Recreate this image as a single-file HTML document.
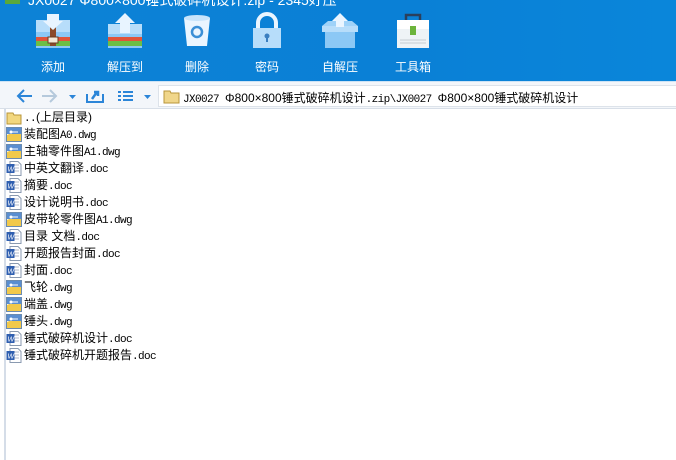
<!DOCTYPE html>
<html><head><meta charset="utf-8"><style>
*{margin:0;padding:0;box-sizing:border-box}
body{width:676px;height:460px;overflow:hidden;background:#fff;font-family:"Liberation Sans","Noto Sans CJK SC",sans-serif;position:relative}
#hdr{position:absolute;left:0;top:0;width:676px;height:81px;background:linear-gradient(90deg,#0d82d6,#0a80d6 60%,#0a86da);}
#title{position:absolute;left:28px;top:-10px;color:#fff;font-size:14px;white-space:nowrap}
.tb{position:absolute;top:12px;width:60px;text-align:center;color:#fff;font-size:12px}
.tb svg{display:block;margin:0 auto}
.tb span{display:block;margin-top:10px}
#bar{position:absolute;left:0;top:81px;width:676px;height:28px;background:#f3f6fa;border-top:1px solid #cde3f5;border-bottom:1px solid #d8dfe8}
#addr{position:absolute;left:158px;top:3px;width:518px;height:22px;background:#fff;border:1px solid #dde3ea;border-right:none}
#addr .t{position:absolute;left:24px;top:3px;font-size:12px;white-space:nowrap;color:#000}
.m{font-family:"Liberation Mono",monospace;font-size:11px;letter-spacing:-0.6px}
#list{position:absolute;left:0;top:109px;width:676px;height:351px;border-left:5px solid #fff}
#lb{position:absolute;left:4px;top:109px;width:2px;height:351px;background:#d5dde8}
.r{position:absolute;left:6px;height:17px;font-size:12px;white-space:nowrap;color:#000;line-height:17px}
.r i{position:absolute;left:0;top:1px;width:16px;height:15px}
.r b{position:absolute;left:18px;font-weight:normal}
</style></head><body>
<div id="hdr">
<div style="position:absolute;left:5px;top:0;width:15px;height:4px;background:#5aa83a"></div>
<div id="title">JX0027 Φ800×800锤式破碎机设计.zip - 2345好压</div>

<div class="tb" style="left:23px"><svg width="36" height="36" viewBox="0 0 36 36"><rect x="1" y="8" width="34" height="28" fill="#8cc8f5"/><rect x="1" y="8" width="34" height="12" fill="#b7ddfa"/><rect x="1" y="25" width="34" height="4" fill="#e0543a"/><rect x="1" y="29" width="34" height="5" fill="#6cbe45"/><rect x="15" y="14" width="6" height="20" fill="#8b4a2a"/><rect x="13" y="25" width="10" height="6" fill="#f3e9d8" stroke="#6a3a20"/><path d="M12 2h12v7h4l-10 9-10-9h4z" fill="#e8f4ff"/></svg><span>添加</span></div>
<div class="tb" style="left:95px"><svg width="36" height="36" viewBox="0 0 36 36"><rect x="1" y="12" width="34" height="24" fill="#8cc8f5"/><rect x="1" y="12" width="34" height="10" fill="#b7ddfa"/><rect x="1" y="25" width="34" height="4" fill="#e0543a"/><rect x="1" y="29" width="34" height="5" fill="#6cbe45"/><path d="M18 1l10 10h-5v10h-10v-10h-5z" fill="#e8f4ff"/></svg><span>解压到</span></div>
<div class="tb" style="left:167px"><svg width="36" height="36" viewBox="0 0 36 36"><path d="M5 6h26l-3 28h-20z" fill="#eaf5ff"/><ellipse cx="18" cy="6" rx="13" ry="3" fill="#c8e4fb"/><circle cx="18" cy="20" r="5" fill="none" stroke="#3b8fd6" stroke-width="2.5"/></svg><span>删除</span></div>
<div class="tb" style="left:237px"><svg width="36" height="36" viewBox="0 0 36 36"><path d="M9 16v-5a9 9 0 0 1 18 0v5" fill="none" stroke="#eaf5ff" stroke-width="4"/><rect x="4" y="16" width="28" height="20" fill="#b7ddfa"/><circle cx="18" cy="24" r="2.5" fill="#3b7fc0"/><rect x="17" y="24" width="2" height="6" fill="#3b7fc0"/></svg><span>密码</span></div>
<div class="tb" style="left:310px"><svg width="40" height="36" viewBox="0 0 40 36"><path d="M2 14l6-5h24l6 5z" fill="#9fd2f8"/><rect x="5" y="14" width="30" height="22" fill="#8cc8f5"/><rect x="2" y="14" width="36" height="6" fill="#b7ddfa"/><path d="M20 1l8 8h-4v6h-8v-6h-4z" fill="#eaf5ff"/></svg><span>自解压</span></div>
<div class="tb" style="left:383px"><svg width="36" height="36" viewBox="0 0 36 36"><path d="M11 8v-5h14v5" fill="none" stroke="#2b3f5c" stroke-width="2.5"/><rect x="2" y="8" width="32" height="28" fill="#eef3f6"/><rect x="2" y="8" width="32" height="9" fill="#fff"/><rect x="15" y="14" width="6" height="9" fill="#6cb43c"/><path d="M5 28h26M5 31h26" stroke="#c5ccd2"/></svg><span>工具箱</span></div>
</div>

<div id="bar">
<svg style="position:absolute;left:14px;top:5px" width="150" height="18" viewBox="0 0 150 18">
<path d="M4 9h14M10 3l-6 6 6 6" fill="none" stroke="#2b85d8" stroke-width="2"/>
<path d="M28 9h14M36 3l6 6-6 6" fill="none" stroke="#b5c9dc" stroke-width="2"/>
<path d="M55 8h7l-3.5 4z" fill="#2b85d8"/>
<path d="M73 7v8h16v-8" fill="none" stroke="#2b85d8" stroke-width="2"/><path d="M78 12l5-7M80 5h4v4" fill="none" stroke="#2b85d8" stroke-width="2.5"/>
<g fill="#2b85d8"><rect x="104" y="4" width="3" height="2"/><rect x="104" y="8" width="3" height="2"/><rect x="104" y="12" width="3" height="2"/><rect x="109" y="4" width="10" height="2"/><rect x="109" y="8" width="10" height="2"/><rect x="109" y="12" width="10" height="2"/></g>
<path d="M130 8h7l-3.5 4z" fill="#2b85d8"/>
</svg>
<div id="addr"><svg style="position:absolute;left:4px;top:3px" width="17" height="15" viewBox="0 0 17 15"><path d="M1 2h6l1 2h8v10h-15z" fill="#f0d68a" stroke="#b8953a"/></svg><div class="t"><span class="m">JX0027 </span>Φ800×800锤式破碎机设计<span class="m">.zip\JX0027 </span>Φ800×800锤式破碎机设计</div></div>
</div>

<div id="lb"></div>
<svg width="0" height="0" style="position:absolute"><defs>
<g id="fo"><path d="M1 3h6l1 2h7v9h-14z" fill="#f2d77e" stroke="#b8953a"/></g>
<g id="dw"><rect x="0.5" y="0.5" width="15" height="14" fill="#fff" stroke="#6a8bb0"/><path d="M1 8l14-6v12h-14z" fill="#f2c94a"/><rect x="1" y="1" width="14" height="6" fill="#5a8ed0"/><circle cx="5" cy="5" r="1.5" fill="#fff"/><path d="M5 5h7" stroke="#fff"/></g>
<g id="dc"><path d="M4 0.5h8l3 3v11h-11z" fill="#fff" stroke="#8a9ab0"/><path d="M7 4h6M7 7h6M7 10h6" stroke="#b0b8c8"/><rect x="0.5" y="3" width="8" height="9" fill="#2f5fb0"/><text x="1.5" y="10.5" font-size="7" fill="#fff" font-family="Liberation Sans">W</text></g>
</defs></svg>
<div class="r" style="top:109px"><i><svg width="16" height="15"><use href="#fo"/></svg></i><b><span class="m">..</span>(上层目录)</b></div>
<div class="r" style="top:126px"><i><svg width="16" height="15"><use href="#dw"/></svg></i><b>装配图<span class="m">A0.dwg</span></b></div>
<div class="r" style="top:143px"><i><svg width="16" height="15"><use href="#dw"/></svg></i><b>主轴零件图<span class="m">A1.dwg</span></b></div>
<div class="r" style="top:160px"><i><svg width="16" height="15"><use href="#dc"/></svg></i><b>中英文翻译<span class="m">.doc</span></b></div>
<div class="r" style="top:177px"><i><svg width="16" height="15"><use href="#dc"/></svg></i><b>摘要<span class="m">.doc</span></b></div>
<div class="r" style="top:194px"><i><svg width="16" height="15"><use href="#dc"/></svg></i><b>设计说明书<span class="m">.doc</span></b></div>
<div class="r" style="top:211px"><i><svg width="16" height="15"><use href="#dw"/></svg></i><b>皮带轮零件图<span class="m">A1.dwg</span></b></div>
<div class="r" style="top:228px"><i><svg width="16" height="15"><use href="#dc"/></svg></i><b>目录 文档<span class="m">.doc</span></b></div>
<div class="r" style="top:245px"><i><svg width="16" height="15"><use href="#dc"/></svg></i><b>开题报告封面<span class="m">.doc</span></b></div>
<div class="r" style="top:262px"><i><svg width="16" height="15"><use href="#dc"/></svg></i><b>封面<span class="m">.doc</span></b></div>
<div class="r" style="top:279px"><i><svg width="16" height="15"><use href="#dw"/></svg></i><b>飞轮<span class="m">.dwg</span></b></div>
<div class="r" style="top:296px"><i><svg width="16" height="15"><use href="#dw"/></svg></i><b>端盖<span class="m">.dwg</span></b></div>
<div class="r" style="top:313px"><i><svg width="16" height="15"><use href="#dw"/></svg></i><b>锤头<span class="m">.dwg</span></b></div>
<div class="r" style="top:330px"><i><svg width="16" height="15"><use href="#dc"/></svg></i><b>锤式破碎机设计<span class="m">.doc</span></b></div>
<div class="r" style="top:347px"><i><svg width="16" height="15"><use href="#dc"/></svg></i><b>锤式破碎机开题报告<span class="m">.doc</span></b></div>
</body></html>
